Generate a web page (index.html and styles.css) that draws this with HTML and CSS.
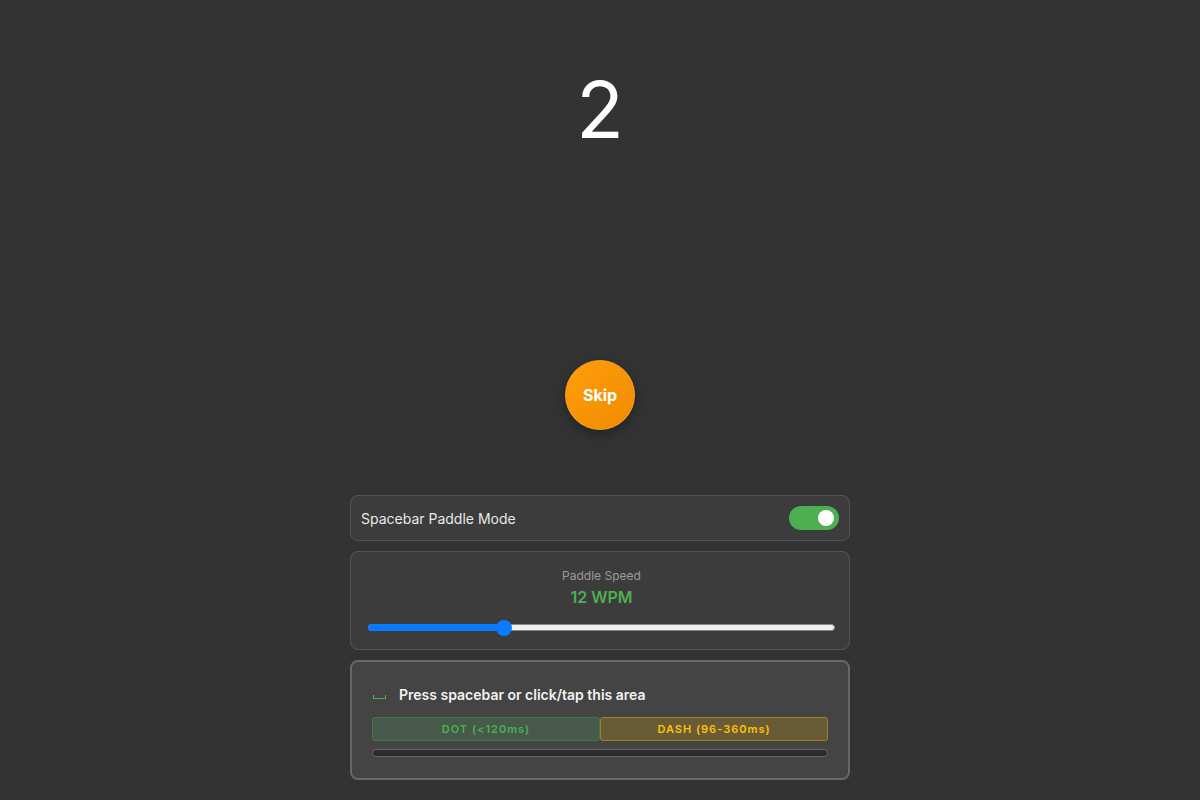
FILE: index.html
```html
<!DOCTYPE html>
<html>
<head>
<meta charset="utf-8">
<link rel="stylesheet" href="styles.css">
</head>
<body>
<main class="app">
  <div class="countdown">2</div>
  <button class="skip">Skip</button>
  <section class="panels">
    <div class="card mode-card">
      <span class="mode-label">Spacebar Paddle Mode</span>
      <span class="toggle"><span class="knob"></span></span>
    </div>
    <div class="card speed-card">
      <div class="speed-label">Paddle Speed</div>
      <div class="speed-value">12 WPM</div>
      <div class="slider">
        <div class="slider-fill" style="width: 29%"></div>
        <div class="slider-thumb" style="left: 29%"></div>
      </div>
    </div>
    <div class="card paddle-card">
      <div class="paddle-hint"><span class="space-glyph" aria-label="space"></span><span class="hint-text">Press spacebar or click/tap this area</span></div>
      <div class="timing">
        <div class="zone dot">DOT (&lt;120ms)</div>
        <div class="zone dash">DASH (96-360ms)</div>
      </div>
      <div class="progress"></div>
    </div>
  </section>
</main>
</body>
</html>
```
FILE: styles.css
```css
html, body {
  margin: 0;
  padding: 0;
  background: #333333;
  font-family: Inter, "Noto Sans", sans-serif;
  color: #fff;
}
.app {
  display: flex;
  flex-direction: column;
  align-items: center;
  height: 800px;
}
.countdown {
  margin-top: 68px;
  font-size: 78px;
  font-weight: 400;
  line-height: 84px;
  color: #fff;
}
.skip {
  margin-top: 208px;
  width: 70px;
  height: 70px;
  border-radius: 50%;
  border: 1px solid #f7a21e;
  background: linear-gradient(135deg, #ff9d0a, #f08c00);
  box-shadow: 0 4px 12px rgba(0,0,0,0.35);
  color: #fff;
  font-family: Inter, sans-serif;
  font-weight: 700;
  font-size: 16px;
  padding: 0;
}
.panels {
  margin-top: 65px;
  width: 500px;
  display: flex;
  flex-direction: column;
  gap: 10px;
}
.card {
  box-sizing: border-box;
  background: #3c3c3c;
  border: 1px solid #555;
  border-radius: 8px;
}
.mode-card {
  height: 46px;
  display: flex;
  align-items: center;
  justify-content: space-between;
  padding: 0 10px 0 10px;
}
.mode-label {
  font-size: 14px;
  color: #e8e8e8;
}
.toggle {
  width: 50px;
  height: 24px;
  border-radius: 12px;
  background: #4caf50;
  position: relative;
}
.knob {
  position: absolute;
  right: 5px;
  top: 4px;
  width: 16px;
  height: 16px;
  border-radius: 50%;
  background: #fff;
}
.speed-card {
  height: 99px;
  padding: 16px 14px 0 17px;
  text-align: center;
}
.speed-label {
  font-size: 12px;
  color: #9a9a9a;
  line-height: 16px;
}
.speed-value {
  margin-top: 3px;
  font-size: 16px;
  font-weight: 600;
  color: #4caf50;
  line-height: 20px;
}
.slider {
  position: relative;
  margin-top: 17px;
  height: 5px;
  background: #efefef;
  border: 1px solid #888;
  border-radius: 4px;
}
.slider-fill {
  position: absolute;
  left: -1px;
  top: -1px;
  bottom: -1px;
  background: #0a7aff;
  border-radius: 4px 0 0 4px;
}
.slider-thumb {
  position: absolute;
  top: 50%;
  width: 16px;
  height: 16px;
  margin-left: -8px;
  margin-top: -8px;
  border-radius: 50%;
  background: #0a7aff;
}
.paddle-card {
  height: 120px;
  background: #444;
  border: 2px solid #676767;
  padding: 22px 20px 0 20px;
}
.paddle-hint {
  display: flex;
  align-items: center;
  gap: 13px;
  height: 20px;
}
.space-glyph {
  box-sizing: border-box;
  width: 13px;
  height: 4px;
  margin-left: 1px;
  margin-top: 6px;
  border: 1.5px solid #4caf50;
  border-top: none;
}
.hint-text {
  font-size: 14px;
  font-weight: 600;
  color: #f2f2f2;
}
.timing {
  margin-top: 13px;
  display: flex;
  height: 24px;
}
.zone {
  flex: 1;
  box-sizing: border-box;
  display: flex;
  align-items: center;
  justify-content: center;
  font-size: 11px;
  font-weight: 600;
  letter-spacing: 1px;
  border-radius: 3px;
}
.dot {
  background: #47594a;
  border: 1px solid #3f7a44;
  color: #4caf50;
}
.dash {
  background: #6a5b37;
  border: 1px solid #a07f20;
  color: #ffc107;
}
.progress {
  margin-top: 8px;
  height: 8px;
  box-sizing: border-box;
  background: #2b2b2b;
  border: 1px solid #666;
  border-radius: 4px;
}
```
